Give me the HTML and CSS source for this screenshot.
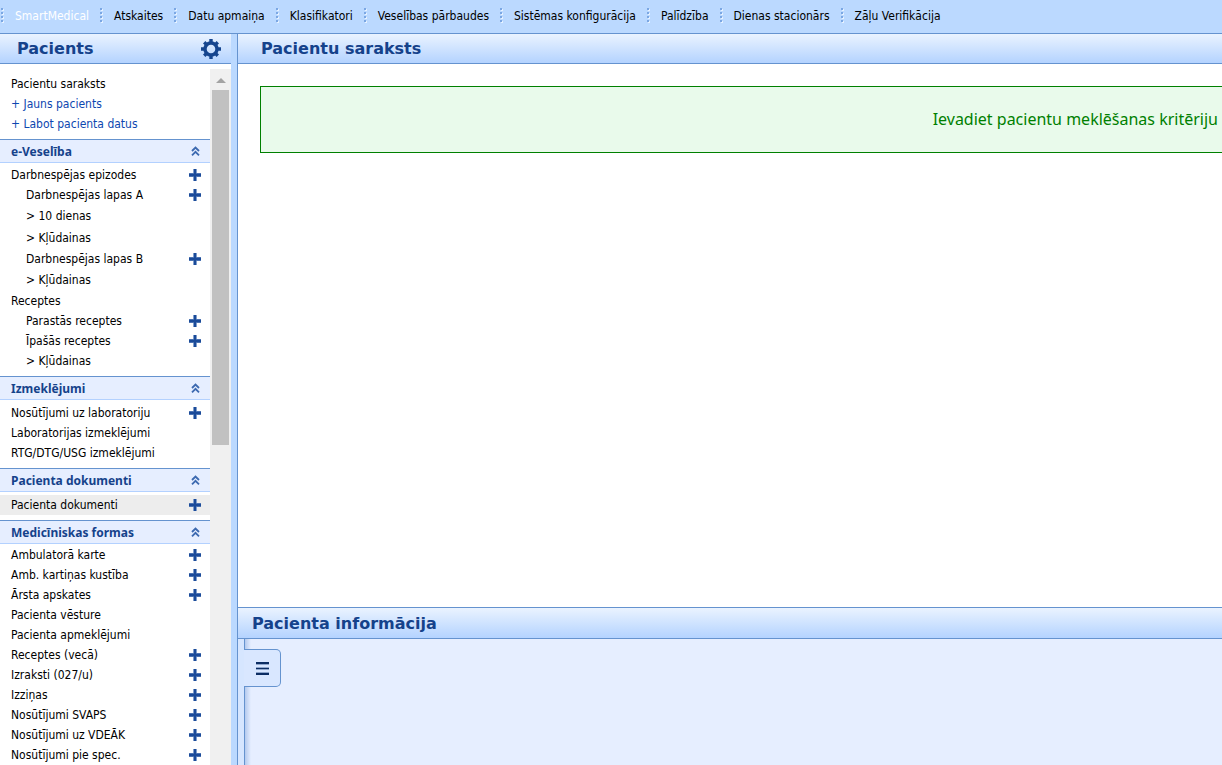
FILE: index.html
```
<!DOCTYPE html>
<html lang="lv">
<head>
  <meta charset="UTF-8">
  <meta name="viewport" content="width=device-width, initial-scale=1.0">
  <title>SmartMedical</title>
  <link rel="stylesheet" href="styles.css">
</head>
<body>
<svg class="defs" width="0" height="0">
  <symbol id="plus" viewBox="0 0 12 12">
    <path d="M4 0h4v4h4v4H8v4H4V8H0V4h4z" fill="#7f9dcb"/>
    <path d="M5 0h2v4.500h5v3H7V12H5V7.500H0v-3h5z" fill="#1b4b99"/>
  </symbol>
  <symbol id="collapse" viewBox="0 0 9 10">
    <path d="M1 5L4.500 1.500L8 5M1 9.300L4.500 5.800L8 9.300" fill="none" stroke="#3c69b0" stroke-width="1.800"/>
  </symbol>
</svg>

<nav class="topbar">
  <a href="#" class="current">SmartMedical</a>
  <a href="#">Atskaites</a>
  <a href="#">Datu apmaiņa</a>
  <a href="#">Klasifikatori</a>
  <a href="#">Veselības pārbaudes</a>
  <a href="#">Sistēmas konfigurācija</a>
  <a href="#">Palīdzība</a>
  <a href="#">Dienas stacionārs</a>
  <a href="#">Zāļu Verifikācija</a>
</nav>

<div class="layout">
  <!-- Sidebar -->
  <aside class="sidebar">
    <div class="panel-header">
      <h2>Pacients</h2>
      <button class="gear" aria-label="Iestatījumi">
        <svg width="20" height="20" viewBox="0 0 20 20">
          <circle cx="10" cy="10" r="6" fill="none" stroke="#15458f" stroke-width="3.400"/>
          <path d="M10 0v4M10 16v4M0 10h4M16 10h4M3.200 3.200l2.400 2.400M14.400 14.400l2.400 2.400M3.200 16.800l2.400-2.400M14.400 5.600l2.400-2.400" stroke="#15458f" stroke-width="3.400"/>
        </svg>
      </button>
    </div>
    <div class="sidebar-body">
      <div class="menu">
        <ul class="first">
          <li><a href="#">Pacientu saraksts</a></li>
          <li><a href="#" class="action">+ Jauns pacients</a></li>
          <li><a href="#" class="action">+ Labot pacienta datus</a></li>
        </ul>

        <h3>e-Veselība <button aria-label="Sakļaut"><svg width="9" height="10"><use href="#collapse"/></svg></button></h3>
        <ul class="nested">
          <li><a href="#">Darbnespējas epizodes</a><button aria-label="Pievienot"><svg width="12" height="12"><use href="#plus"/></svg></button></li>
          <li class="sub"><a href="#">Darbnespējas lapas A</a><button aria-label="Pievienot"><svg width="12" height="12"><use href="#plus"/></svg></button></li>
          <li class="sub filter"><a href="#">&gt; 10 dienas</a></li>
          <li class="sub filter"><a href="#">&gt; Kļūdainas</a></li>
          <li class="sub"><a href="#">Darbnespējas lapas B</a><button aria-label="Pievienot"><svg width="12" height="12"><use href="#plus"/></svg></button></li>
          <li class="sub filter"><a href="#">&gt; Kļūdainas</a></li>
          <li><a href="#">Receptes</a></li>
          <li class="sub"><a href="#">Parastās receptes</a><button aria-label="Pievienot"><svg width="12" height="12"><use href="#plus"/></svg></button></li>
          <li class="sub"><a href="#">Īpašās receptes</a><button aria-label="Pievienot"><svg width="12" height="12"><use href="#plus"/></svg></button></li>
          <li class="sub"><a href="#">&gt; Kļūdainas</a></li>
        </ul>

        <h3>Izmeklējumi <button aria-label="Sakļaut"><svg width="9" height="10"><use href="#collapse"/></svg></button></h3>
        <ul>
          <li><a href="#">Nosūtījumi uz laboratoriju</a><button aria-label="Pievienot"><svg width="12" height="12"><use href="#plus"/></svg></button></li>
          <li><a href="#">Laboratorijas izmeklējumi</a></li>
          <li><a href="#">RTG/DTG/USG izmeklējumi</a></li>
        </ul>

        <h3>Pacienta dokumenti <button aria-label="Sakļaut"><svg width="9" height="10"><use href="#collapse"/></svg></button></h3>
        <ul>
          <li class="hovered"><a href="#">Pacienta dokumenti</a><button aria-label="Pievienot"><svg width="12" height="12"><use href="#plus"/></svg></button></li>
        </ul>

        <h3>Medicīniskas formas <button aria-label="Sakļaut"><svg width="9" height="10"><use href="#collapse"/></svg></button></h3>
        <ul class="tight">
          <li><a href="#">Ambulatorā karte</a><button aria-label="Pievienot"><svg width="12" height="12"><use href="#plus"/></svg></button></li>
          <li><a href="#">Amb. kartiņas kustība</a><button aria-label="Pievienot"><svg width="12" height="12"><use href="#plus"/></svg></button></li>
          <li><a href="#">Ārsta apskates</a><button aria-label="Pievienot"><svg width="12" height="12"><use href="#plus"/></svg></button></li>
          <li><a href="#">Pacienta vēsture</a></li>
          <li><a href="#">Pacienta apmeklējumi</a></li>
          <li><a href="#">Receptes (vecā)</a><button aria-label="Pievienot"><svg width="12" height="12"><use href="#plus"/></svg></button></li>
          <li><a href="#">Izraksti (027/u)</a><button aria-label="Pievienot"><svg width="12" height="12"><use href="#plus"/></svg></button></li>
          <li><a href="#">Izziņas</a><button aria-label="Pievienot"><svg width="12" height="12"><use href="#plus"/></svg></button></li>
          <li><a href="#">Nosūtījumi SVAPS</a><button aria-label="Pievienot"><svg width="12" height="12"><use href="#plus"/></svg></button></li>
          <li><a href="#">Nosūtījumi uz VDEĀK</a><button aria-label="Pievienot"><svg width="12" height="12"><use href="#plus"/></svg></button></li>
          <li><a href="#">Nosūtījumi pie spec.</a><button aria-label="Pievienot"><svg width="12" height="12"><use href="#plus"/></svg></button></li>
        </ul>
      </div>
      <div class="scrollbar">
        <svg class="scroll-up" width="10" height="5" viewBox="0 0 10 5"><path d="M0 5L5 0L10 5z" fill="#a3a3a3"/></svg>
        <div class="scroll-thumb"></div>
      </div>
    </div>
  </aside>

  <!-- Content -->
  <main class="content">
    <div class="panel-header wide">
      <h1>Pacientu saraksts</h1>
    </div>
    <section class="list">
      <p class="message">Ievadiet pacientu meklēšanas kritēriju</p>
    </section>
    <div class="panel-header info-header">
      <h2>Pacienta informācija</h2>
    </div>
    <section class="info">
      <div class="info-body">
        <button class="info-tab" aria-label="Izvēlne">
          <svg width="13" height="13" viewBox="0 0 13 13">
            <path d="M0 2h13v1H0zM0 5h13v3H0zM0 10h13v1H0z" fill="#8ea6cd"/>
            <path d="M0 0h13v2H0zM0 6h13v1H0zM0 11h13v2H0z" fill="#0c2d63"/>
          </svg>
        </button>
      </div>
    </section>
  </main>
</div>
</body>
</html>
```
FILE: styles.css
```
* { box-sizing: border-box; }
body {
  margin: 0;
  height: 100vh;
  display: flex;
  flex-direction: column;
  overflow: hidden;
  font-family: Tahoma, 'DejaVu Sans Condensed', 'DejaVu Sans', sans-serif;
  font-size: 12px;
  background: #bbd9ff;
  color: #000;
}
a { color: inherit; text-decoration: none; }
button {
  display: flex;
  padding: 0;
  border: none;
  background: none;
  cursor: pointer;
}
h1, h2, h3, p, ul { margin: 0; padding: 0; }
.defs { position: absolute; }

/* Top menu */
.topbar {
  flex: none;
  display: flex;
  height: 34px;
  padding-left: 1px;
  border-bottom: 1px solid #6593cf;
}
.topbar a {
  display: flex;
  padding-right: 12px;
  line-height: 32px;
  white-space: nowrap;
}
.topbar a::before {
  content: '';
  width: 3px;
  height: 15px;
  margin: 8px 11px 0 0;
  margin-left: -1px;
  background:
    linear-gradient(#7ba7e3 2px, transparent 2px) 0 0 / 2px 4px repeat-y,
    linear-gradient(transparent 1px, #e6f1ff 1px, #e6f1ff 3px, transparent 3px) 1px 0 / 2px 4px repeat-y;
}
.topbar a:first-child::before { margin-left: 0; }
.topbar .current { color: #fff; }

/* Layout */
.layout {
  flex: 1;
  display: flex;
  min-height: 0;
}
.sidebar {
  flex: none;
  width: 231px;
  display: flex;
  flex-direction: column;
}
.content {
  flex: 1;
  min-width: 0;
  margin-left: 6px;
  display: flex;
  flex-direction: column;
  border-left: 1px solid #6593cf;
}
.panel-header {
  flex: none;
  display: flex;
  align-items: center;
  justify-content: space-between;
  height: 30px;
  padding: 0 10px 0 17px;
  border-bottom: 1px solid #6593cf;
  background: linear-gradient(#eaf3ff, #b4d3ff);
}
.panel-header h1, .panel-header h2 {
  font-family: Verdana, 'DejaVu Sans', sans-serif;
  font-size: 16px;
  color: #15428b;
}
.wide { padding-left: 23px; }

/* Sidebar */
.sidebar-body {
  flex: 1;
  display: flex;
  min-height: 0;
  padding-top: 5px;
  background: #fff;
}
.menu {
  flex: 1;
  overflow: hidden;
}
.menu h3 {
  display: flex;
  align-items: center;
  justify-content: space-between;
  height: 24px;
  padding: 0 10px 0 11px;
  border-top: 1px solid #6593cf;
  border-bottom: 1px solid #b3d1ff;
  background: #e6eeff;
  font-family: Tahoma, 'Noto Sans', sans-serif;
  font-size: 12px;
  color: #15428b;
}
.menu ul {
  padding: 3px 0 5px;
  list-style: none;
}
.menu ul.first { padding-top: 5px; }
.menu ul.nested { padding: 2px 0 5px; }
.menu ul.tight { padding: 1px 0 4px; }
.menu li {
  display: flex;
  align-items: center;
  justify-content: space-between;
  height: 20px;
  padding: 0 9px 0 11px;
}
.menu li.sub { padding-left: 26px; }
.menu li.filter { height: 22px; }
.menu li.hovered { background: #ededed; }
.action { color: #0d47b0; }

.scrollbar {
  width: 21px;
  padding: 0 2px;
  background: #f0f0f0;
}
.scroll-up {
  display: block;
  margin: 9px auto 7px;
}
.scroll-thumb {
  height: 51%;
  background: #c1c1c1;
}

/* Patient list */
.list {
  flex: 1;
  padding: 22px 0 0 22px;
  background: #fff;
}
.message {
  padding: 0 4px 0 0;
  border: 1px solid #008000;
  border-right: none;
  background: #e9faeb;
  font-family: Tahoma, 'Noto Sans', sans-serif;
  font-size: 16px;
  line-height: 65px;
  text-align: right;
  color: #008000;
}

/* Patient information */
.info-header {
  height: 32px;
  padding-left: 14px;
  border-top: 1px solid #6593cf;
}
.info {
  flex: none;
  height: 126px;
  padding-left: 6px;
  background: #d6e6ff;
}
.info-body {
  height: 100%;
  padding-top: 10px;
  border-left: 1px solid #6593cf;
  background: linear-gradient(to right, #b4caee, #e6eeff 6px);
}
.info-tab {
  align-items: center;
  justify-content: center;
  width: 37px;
  height: 38px;
  margin-left: -1px;
  border: 1px solid #6593cf;
  border-left: none;
  border-radius: 0 5px 5px 0;
  background: #d9e7ff;
}
```
